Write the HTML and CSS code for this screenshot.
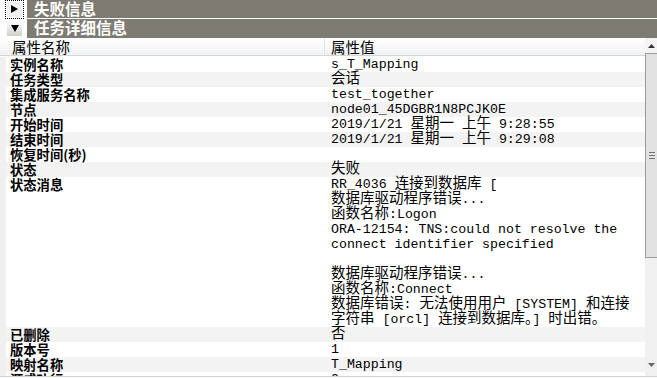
FILE: index.html
```html
<!DOCTYPE html>
<html>
<head>
<meta charset="utf-8">
<title>任务详细信息</title>
<link rel="stylesheet" href="styles.css">
</head>
<body>
<div class="panel">
    <div class="sec first">
        <span class="tog focus"><span class="btn"><svg width="7" height="8" viewBox="0 0 7 8"><path d="M0 0 L7 4 L0 8 Z" fill="#000"/></svg></span></span>
        <h2 class="bar">失败信息</h2>
    </div>
    <div class="sec">
        <span class="tog"><span class="btn open"><svg width="8" height="7" viewBox="0 0 8 7"><path d="M0 0 L8 0 L4 7 Z" fill="#000"/></svg></span></span>
        <h2 class="bar">任务详细信息</h2>
    </div>
    <div class="grid">
        <div class="list">
            <div class="head">
                <div class="hk">属性名称</div>
                <div class="hv">属性值</div>
            </div>
            <div class="rows">
                <div class="row"><div class="k">实例名称</div><div class="v">s_T_Mapping</div></div>
                <div class="row"><div class="k">任务类型</div><div class="v"><span class="zh">会话</span></div></div>
                <div class="row"><div class="k">集成服务名称</div><div class="v">test_together</div></div>
                <div class="row"><div class="k">节点</div><div class="v">node01_45DGBR1N8PCJK0E</div></div>
                <div class="row"><div class="k">开始时间</div><div class="v">2019/1/21 <span class="zh">星期一</span> <span class="zh">上午</span> 9:28:55</div></div>
                <div class="row"><div class="k">结束时间</div><div class="v">2019/1/21 <span class="zh">星期一</span> <span class="zh">上午</span> 9:29:08</div></div>
                <div class="row"><div class="k">恢复时间(秒)</div><div class="v"></div></div>
                <div class="row"><div class="k">状态</div><div class="v"><span class="zh">失败</span></div></div>
                <div class="row"><div class="k">状态消息</div><div class="v">RR_4036 <span class="zh">连接到数据库</span> [<br><span class="zh">数据库驱动程序错误</span>...<br><span class="zh">函数名称</span>:Logon<br>ORA-12154: TNS:could not resolve the<br>connect identifier specified<br>&nbsp;<br><span class="zh">数据库驱动程序错误</span>...<br><span class="zh">函数名称</span>:Connect<br><span class="zh">数据库错误</span>: <span class="zh">无法使用用户</span> [SYSTEM] <span class="zh">和连接</span><br><span class="zh">字符串</span> [orcl] <span class="zh">连接到数据库。</span>] <span class="zh">时出错。</span></div></div>
                <div class="row"><div class="k">已删除</div><div class="v"><span class="zh">否</span></div></div>
                <div class="row"><div class="k">版本号</div><div class="v">1</div></div>
                <div class="row"><div class="k">映射名称</div><div class="v">T_Mapping</div></div>
                <div class="row"><div class="k">源成功行</div><div class="v">0</div></div>
            </div>
        </div>
        <div class="sbar">
            <div class="arrow up"><svg width="7" height="4" viewBox="0 0 7 4"><path d="M3.5 0 L7 4 L0 4 Z" fill="#333"/></svg></div>
            <div class="thumb"><span class="grip"></span></div>
            <div class="track"></div>
            <div class="arrow down"><svg width="7" height="4" viewBox="0 0 7 4"><path d="M0 0 L7 0 L3.5 4 Z" fill="#666"/></svg></div>
        </div>
    </div>
</div>
</body>
</html>
```

FILE: styles.css
```css
html, body {
    margin: 0;
    padding: 0;
    background: #fff;
}
.panel {
    width: 657px;
    height: 378px;
    overflow: hidden;
    font-family: "Noto Sans CJK SC", sans-serif;
    color: #000;
}
.sec {
    display: flex;
    height: 18px;
    margin-bottom: 1px;
}
.sec + .sec {
    height: 19px;
    margin-bottom: 0;
}
.tog {
    width: 27px;
    display: flex;
    align-items: center;
    padding-left: 5px;
    box-sizing: border-box;
}
.tog.focus .btn {
    outline: 1px dotted #000;
    outline-offset: 1px;
}
.btn {
    width: 15px;
    height: 15px;
    display: flex;
    align-items: center;
    justify-content: center;
    background: #f0f0f0;
    margin-left: 2px;
}
.btn.open {
    background: linear-gradient(#ffffff, #cfcfca);
}
.bar {
    flex: 1;
    margin: 0;
    background: #7e7b72;
    color: #fff;
    font-size: 15.5px;
    font-weight: bold;
    line-height: 17px;
    padding-left: 7px;
    overflow: hidden;
}
.grid {
    display: flex;
    height: 338px;
    border-bottom: 1px solid #d4d4d4;
}
.list {
    flex: 1;
    overflow: hidden;
}
.head {
    display: flex;
    height: 17px;
    background: linear-gradient(#ffffff, #f1f2f4);
    border-bottom: 1px solid #d5d5d5;
    font-size: 14.5px;
    line-height: 17px;
    margin-bottom: 1px;
}
.hk {
    width: 325px;
    padding-left: 12px;
    box-sizing: border-box;
    border-right: 1px solid #e3e3e3;
}
.hv {
    padding-left: 6px;
}
.rows {
    padding-left: 6px;
    background: #f0f0f0;
}
.row {
    display: flex;
    background: #fff;
    line-height: 15px;
}
.row:nth-child(even) {
    background: #f3f3f3;
}
.k {
    width: 319px;
    height: 15px;
    padding-left: 4px;
    box-sizing: border-box;
    font-size: 13.3px;
    font-weight: bold;
    line-height: 15px;
}
.v {
    flex: 1;
    padding-left: 6px;
    font-family: "Liberation Mono", "Noto Sans CJK SC", monospace;
    font-size: 13.25px;
    line-height: 15px;
    min-height: 15px;
    white-space: nowrap;
}
.zh {
    font-family: "Noto Sans CJK SC", sans-serif;
    font-size: 14.5px;
    line-height: 9px;
}
.sbar {
    width: 12px;
    display: flex;
    flex-direction: column;
    background: #f0f0f0;
}
.arrow {
    height: 15px;
    display: flex;
    align-items: center;
    justify-content: center;
}
.arrow.up {
    background: #f4f4f4;
}
.arrow.down {
    height: 14px;
    margin-bottom: 4px;
}
.thumb {
    height: 205px;
    background: #e2e2e2;
    border: 1px solid #9c9c9c;
    border-right: none;
    box-sizing: border-box;
    display: flex;
    align-items: center;
    justify-content: center;
}
.grip {
    width: 6px;
    height: 5px;
    border-top: 1px solid #707070;
    border-bottom: 1px solid #707070;
    position: relative;
}
.grip::after {
    content: "";
    position: absolute;
    left: 0;
    right: 0;
    top: 2px;
    border-top: 1px solid #707070;
}
.track {
    flex: 1;
}
```
